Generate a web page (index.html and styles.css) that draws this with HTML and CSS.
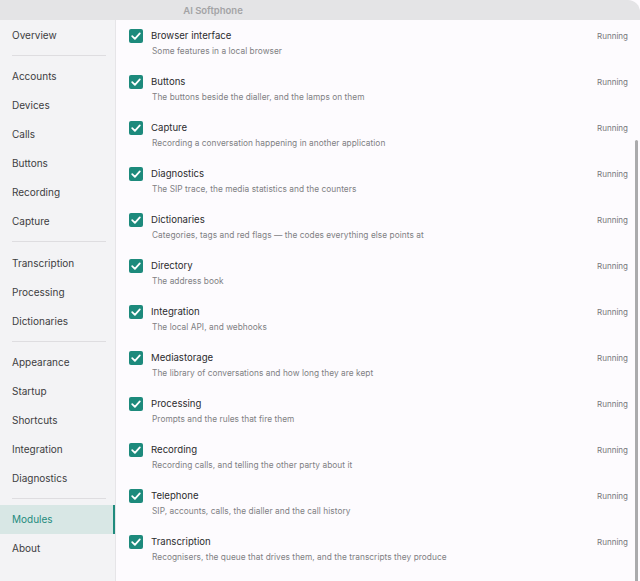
FILE: index.html
```html
<!DOCTYPE html>
<html>
<head>
<meta charset="utf-8">
<link rel="stylesheet" href="styles.css">
</head>
<body>
<div class="window">
  <div class="titlebar"><span class="title">AI Softphone</span></div>
  <div class="body">
    <nav class="sidebar">
      <div class="item">Overview</div>
      <div class="divider"></div>
      <div class="item">Accounts</div>
      <div class="item">Devices</div>
      <div class="item">Calls</div>
      <div class="item">Buttons</div>
      <div class="item">Recording</div>
      <div class="item">Capture</div>
      <div class="divider"></div>
      <div class="item">Transcription</div>
      <div class="item">Processing</div>
      <div class="item">Dictionaries</div>
      <div class="divider"></div>
      <div class="item">Appearance</div>
      <div class="item">Startup</div>
      <div class="item">Shortcuts</div>
      <div class="item">Integration</div>
      <div class="item">Diagnostics</div>
      <div class="divider"></div>
      <div class="item active">Modules</div>
      <div class="item">About</div>
    </nav>
    <main class="main">
      <div class="row"><span class="check"><svg viewBox="0 0 14 14"><path d="M3.2 7.2 L5.9 9.8 L10.8 4.4" /></svg></span><div class="text"><div class="name">Browser interface</div><div class="desc">Some features in a local browser</div></div><span class="status">Running</span></div>
      <div class="row"><span class="check"><svg viewBox="0 0 14 14"><path d="M3.2 7.2 L5.9 9.8 L10.8 4.4" /></svg></span><div class="text"><div class="name">Buttons</div><div class="desc">The buttons beside the dialler, and the lamps on them</div></div><span class="status">Running</span></div>
      <div class="row"><span class="check"><svg viewBox="0 0 14 14"><path d="M3.2 7.2 L5.9 9.8 L10.8 4.4" /></svg></span><div class="text"><div class="name">Capture</div><div class="desc">Recording a conversation happening in another application</div></div><span class="status">Running</span></div>
      <div class="row"><span class="check"><svg viewBox="0 0 14 14"><path d="M3.2 7.2 L5.9 9.8 L10.8 4.4" /></svg></span><div class="text"><div class="name">Diagnostics</div><div class="desc">The SIP trace, the media statistics and the counters</div></div><span class="status">Running</span></div>
      <div class="row"><span class="check"><svg viewBox="0 0 14 14"><path d="M3.2 7.2 L5.9 9.8 L10.8 4.4" /></svg></span><div class="text"><div class="name">Dictionaries</div><div class="desc">Categories, tags and red flags — the codes everything else points at</div></div><span class="status">Running</span></div>
      <div class="row"><span class="check"><svg viewBox="0 0 14 14"><path d="M3.2 7.2 L5.9 9.8 L10.8 4.4" /></svg></span><div class="text"><div class="name">Directory</div><div class="desc">The address book</div></div><span class="status">Running</span></div>
      <div class="row"><span class="check"><svg viewBox="0 0 14 14"><path d="M3.2 7.2 L5.9 9.8 L10.8 4.4" /></svg></span><div class="text"><div class="name">Integration</div><div class="desc">The local API, and webhooks</div></div><span class="status">Running</span></div>
      <div class="row"><span class="check"><svg viewBox="0 0 14 14"><path d="M3.2 7.2 L5.9 9.8 L10.8 4.4" /></svg></span><div class="text"><div class="name">Mediastorage</div><div class="desc">The library of conversations and how long they are kept</div></div><span class="status">Running</span></div>
      <div class="row"><span class="check"><svg viewBox="0 0 14 14"><path d="M3.2 7.2 L5.9 9.8 L10.8 4.4" /></svg></span><div class="text"><div class="name">Processing</div><div class="desc">Prompts and the rules that fire them</div></div><span class="status">Running</span></div>
      <div class="row"><span class="check"><svg viewBox="0 0 14 14"><path d="M3.2 7.2 L5.9 9.8 L10.8 4.4" /></svg></span><div class="text"><div class="name">Recording</div><div class="desc">Recording calls, and telling the other party about it</div></div><span class="status">Running</span></div>
      <div class="row"><span class="check"><svg viewBox="0 0 14 14"><path d="M3.2 7.2 L5.9 9.8 L10.8 4.4" /></svg></span><div class="text"><div class="name">Telephone</div><div class="desc">SIP, accounts, calls, the dialler and the call history</div></div><span class="status">Running</span></div>
      <div class="row"><span class="check"><svg viewBox="0 0 14 14"><path d="M3.2 7.2 L5.9 9.8 L10.8 4.4" /></svg></span><div class="text"><div class="name">Transcription</div><div class="desc">Recognisers, the queue that drives them, and the transcripts they produce</div></div><span class="status">Running</span></div>
      <div class="scrollbar"></div>
    </main>
  </div>
</div>
</body>
</html>
```

FILE: styles.css
```css
* { box-sizing: border-box; }
html, body { margin: 0; padding: 0; }
body {
  width: 640px;
  height: 581px;
  overflow: hidden;
  background: #fdfbfe;
  font-family: Inter, "Noto Sans", sans-serif;
}
.window {
  width: 640px;
  height: 581px;
  display: flex;
  flex-direction: column;
}
.titlebar {
  height: 20px;
  flex: none;
  background: #e4e4e6;
  border-top-right-radius: 12px;
  display: flex;
  align-items: center;
}
.title {
  width: 426px;
  text-align: center;
  font-size: 9.5px;
  font-weight: 600;
  color: #a3a3a5;
}
.body {
  flex: 1;
  display: flex;
  min-height: 0;
  overflow: hidden;
}
.sidebar {
  width: 116px;
  flex: none;
  background: #f3f3f5;
  border-right: 1px solid #e6e5e8;
  padding-top: 1px;
  display: flex;
  flex-direction: column;
}
.item {
  height: 29px;
  flex: none;
  line-height: 29px;
  padding-left: 12px;
  font-size: 10px;
  color: #3d3d3f;
}
.item.active {
  background: #d8e7e5;
  color: #1f8b7d;
  box-shadow: inset -2px 0 0 #1f8b7d;
}
.divider {
  height: 1px;
  flex: none;
  background: #dedde0;
  margin: 5px 9px 6.3px 12px;
}
.main {
  flex: 1;
  position: relative;
  padding: 0 13px 0 13px;
  display: flex;
  flex-direction: column;
  overflow: hidden;
}
.row {
  height: 46px;
  flex: none;
  display: flex;
  align-items: flex-start;
  padding-top: 9px;
}
.check {
  width: 14px;
  height: 14px;
  border-radius: 2px;
  background: #1d8a7c;
  flex: none;
  display: flex;
  align-items: center;
  justify-content: center;
}
.check svg {
  width: 14px;
  height: 14px;
}
.check path {
  fill: none;
  stroke: #ffffff;
  stroke-width: 1.8;
  stroke-linecap: round;
  stroke-linejoin: round;
}
.text {
  flex: 1;
  margin-left: 8px;
}
.name {
  font-size: 9.6px;
  line-height: 14px;
  color: #2c2c2e;
}
.desc {
  font-size: 8.3px;
  line-height: 12px;
  margin-top: 2px;
  margin-left: 1px;
  color: #808083;
  letter-spacing: 0.05px;
}
.status {
  font-size: 8px;
  line-height: 14px;
  color: #77777a;
  flex: none;
  margin-right: -1px;
}
.scrollbar {
  position: absolute;
  right: 2px;
  top: 120px;
  width: 3px;
  height: 445px;
  border-radius: 2px;
  background: #aaaaac;
}
```
